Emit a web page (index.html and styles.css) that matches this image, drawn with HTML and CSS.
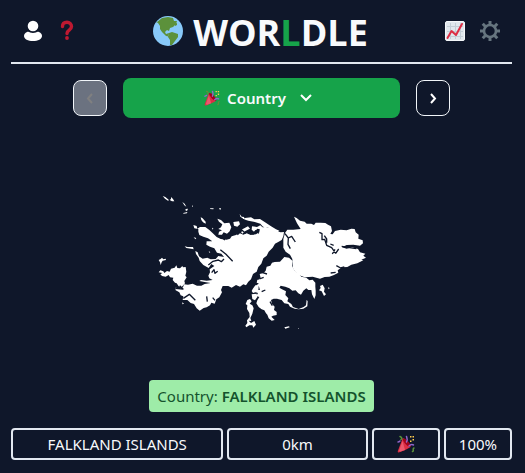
FILE: index.html
```html
<!DOCTYPE html>
<html lang="en">
<head>
<meta charset="utf-8">
<meta name="viewport" content="width=device-width, initial-scale=1">
<title>Worldle</title>
<link rel="stylesheet" href="styles.css">
</head>
<body>
<svg class="defs" aria-hidden="true">
  <symbol id="party" viewBox="0 0 36 36">
    <path fill="#dd2e44" d="M11 7c0 .5-8 22-9 24-.6 1.500-1 4 1 4 3 0 22-9 24-11 1-3-3-8-7-12S12 5 11 7z"/>
    <path fill="#ea596e" d="M11 12 4 32l3 1 9-3-5-18z"/>
    <path fill="#a0041e" d="M12 7c3-1 7 2 11 7s6 9 4 10-8-3-11-7-6-9-4-10z"/>
    <path fill="none" stroke="#9266cc" stroke-width="3" stroke-linecap="round" d="M19 14c3-4 1-8 0-11M2 14c2 0 3-1 4-2M24 22c4-4 7-3 9-2"/>
    <path fill="none" stroke="#5c913b" stroke-width="3" stroke-linecap="round" d="M8 9c3-2 1-5-2-6M31 33c4-1-1-5 3-7"/>
    <path fill="#ffcc4d" d="M26 2h3v3h-3zM31 8h3v3h-3zM26 11h3v3h-3zM31 2h3v3h-3z"/>
  </symbol>
</svg>
<div class="page">
  <header class="header">
    <nav class="tools">
      <button class="icon-button" aria-label="Profile">
        <svg width="20" height="22" viewBox="0 0 20 22" fill="#fff"><circle cx="10" cy="6" r="5.300"/><path d="M4 12c2-1 3 1 6 1s4-2 6-1c2 .8 3 2.400 3 4 0 3-4 5-9 5s-9-2-9-5c0-1.600 1-3.200 3-4z"/></svg>
      </button>
      <button class="icon-button" aria-label="Help">
        <svg width="18" height="22" viewBox="-2 0 18 22"><path fill="none" stroke="#be1931" stroke-width="3.400" stroke-linecap="round" stroke-linejoin="round" d="M2.500 6.500c0-3 2-4.300 4.500-4.300s4.500 1.800 4.500 4.300c0 4-4.500 3.200-4.500 7"/><circle cx="7" cy="18" r="1.900" fill="#be1931"/></svg>
      </button>
    </nav>
    <h1 class="brand">
      <svg width="30" height="30" viewBox="0 0 30 30" aria-hidden="true"><circle cx="15" cy="15" r="15" fill="#88c9f9"/><path fill="#5c913b" d="M4 6 9 2l6-1 5 1 1 3 3 0-1 3-3 3-3 1-1 3-2-1-2 2 1 2 3-1-1 3 3 0 0 1-5-1-4-4-2-3 0-3-2-3-2-1zM16 17l3-1 6 2 0 3-3 4-3 4-2 0 0-5-2-3zM22 8l2-1 0 2-2 1z"/></svg>
      <span class="wordmark">WOR<span class="accent">L</span>DLE</span>
    </h1>
    <nav class="tools">
      <button class="icon-button" aria-label="Statistics">
        <svg width="20" height="20" viewBox="0 0 20 20"><rect x=".5" y=".5" width="19" height="19" rx="1.500" fill="#e1e8ed" stroke="#f5f8fa"/><path stroke="#c3ced6" fill="none" d="M2 5.500h16M2 10.500h16M2 15.500h16M5.500 2v16M10.500 2v16M15.500 2v16"/><path fill="none" stroke="#dd2e44" stroke-width="2" stroke-linecap="round" stroke-linejoin="round" d="m2.500 17 4-7 4.500 4L17 3"/></svg>
      </button>
      <button class="icon-button" aria-label="Settings">
        <svg width="20" height="20" viewBox="0 0 20 20"><circle cx="10" cy="10" r="6" fill="none" stroke="#66757f" stroke-width="2.600"/><path stroke="#66757f" stroke-width="3" d="M10 0v4M10 16v4M0 10h4M16 10h4M2.700 2.700l3 3M14.300 14.300l3 3M17.300 2.700l-3 3M5.700 14.300l-3 3"/></svg>
      </button>
    </nav>
  </header>

  <main class="game">
    <div class="rounds">
      <button class="step" disabled aria-label="Previous round">
        <svg width="12" height="14" viewBox="0 0 12 14"><path d="M8 3 4 7.500 8 12"/></svg>
      </button>
      <button class="round">
        <svg width="16" height="16" aria-hidden="true"><use href="#party"/></svg>
        <span>Country</span>
        <svg class="chevron" width="14" height="10" viewBox="0 0 14 10" aria-hidden="true"><path d="m2 2 5 5 5-5"/></svg>
      </button>
      <button class="step" aria-label="Next round">
        <svg width="12" height="14" viewBox="0 0 12 14"><path d="M4 3l4 4.500L4 12"/></svg>
      </button>
    </div>

    <div class="map">
      <svg width="223" height="150" viewBox="0 0 669 450" role="img" aria-label="Country outline">
        <g fill="#fff">
          <!-- Western main island -->
          <path d="M130 120L140 123 142 131 150 126 166 126 178 135 190 146 200 156 212 162 230 164 240 161 245 154 258 150 268 144 280 149 290 145 302 150 318 148 328 141 330 130 346 125 356 129 368 135 380 138 392 142 402 141 400 154 395 165 386 170 375 176 368 188 356 200 350 212 340 220 334 236 325 246 320 260 309 267 303 283 295 290 288 301 280 298 270 305 258 300 245 308 235 303 218 303 213 315 216 322 208 337 199 343 194 356 184 353 180 361 170 367 161 369 149 377 140 370 132 357 122 354 112 345 98 345 100 334 92 331 88 322 77 316 76 308 88 310 99 307 102 298 114 299 128 296 141 302 154 302 164 297 182 294 168 292 148 288 153 285 170 287 188 285 178 280 175 272 180 262 179 253 193 243 184 237 176 249 160 240 149 228 146 218 138 207 136 198 143 202 147 214 158 221 172 218 182 223 197 222 205 213 222 216 214 206 201 203 193 190 180 185 169 179 170 169 187 169 174 160 160 155 148 150 145 140 145 132 133 130z"/>
          <!-- Northern coves and islets -->
          <path d="M202 101l11 4 10 10 15-2 6 14-5 12-8 7-10-4-5 7-11 0 2-9 9-4-11-4 8-5 4-9-10-8zM250 111l17-2 3 9-8 7-10-3zM269 87l6 8 8 1-2 6-10-7zM285 99l18-2 10 6 17-1 14 9 18 12 16 10 10 4-9 8-16-5-8-12-16-3-8-9-20-6-16-3-7-2-9-4zM277 133l17-9 6 7-14 7-9 8-4-5zM306 124l15 2 10-5 9 8-11 4-7-2-9 10-8-7zM338 132l14-2 9 10-14 4-5 3-8-6z"/>
          <!-- Western islets -->
          <path d="M38 33l8 3 10 8-1 4-10-7zM63 36l6 6 4 7-7 0-7-4 4-3zM97 51l7 5 5 9-6-4zM107 72l7-1-3 7-5-2zM100 84l12-3-1 4-11 1zM181 70l10 0-1 3-10-1zM208 69l5 1-1 4-4-1zM126 60l3 4-2 3zM152 97l5 2 10 11 0 6-8-4-5-7zM131 157l8 2-3 4zM104 184l9 2 16 0 2 7-8-2-14-2zM176 199l5 2-2 3zM186 128l4 2-2 4zM97 352l5 4-5 2z"/>
          <path d="M26 225l6-3 4-4 4 5 7-2 1 4-10 2-3 5-3 8-2-8zM26 262l5-6 9 3 3 5 8-6 8 2 4-9 11-3 5-7 3 8 8 1 7-7 2 4 8-1 2 14-3 12 4 5-7 11 2 7-10 11-9-2-6-9-5-2-7-8 2-7-10-1-4-7-9 5-11-2-5-5 6-4z"/>
          <!-- Eastern main island -->
          <path d="M432 95L440 99 450 107 464 110 470 116 484 116 492 120 497 113 512 113 526 114 534 119 543 124 546 138 541 147 548 148 555 138 572 134 590 136 604 131 614 132 617 142 626 149 625 161 638 166 639 175 630 182 610 179 590 180 576 187 590 191 606 187 624 192 630 202 646 206 640 212 648 218 634 224 640 226 622 235 604 239 592 246 576 247 563 256 565 263 552 270 538 275 524 276 510 281 488 275 464 277 448 271 436 261 428 248 428 236 427 222 420 209 407 200 400 188 400 162 405 144 412 134 430 134 452 132 441 115z"/>
          <!-- Southern lowland -->
          <path d="M390 230l13-14 14 2 11 10-2 15 10 17 9 5 9 10 15 3 9 8 10-2 8 9 0 12 1 12 0 14-4 11-7-14-2-13-9 0-6-5-9 7-7 12-8-4-8-9-10 1-9-7-12-5-14-3-4 6 8 5 12 6-2 11 9 10-3 9 12 8 5 9 17 6 15-6 7-5 2-17 3 5-1 15-12 7-14 2-12-2-14-6-5-8-12-2-8-10-14-4-10 0-8 4 3 12 8 8-2 10 8 6 0 9-11 2-5 3 10 10-9 2-9-7-4-11-4-4-5-9-8-3-9-7-7-11 3-9 6-10-9-3 5-9-7-2 3-9 10 2-3-10-8-4 7-5-1-12 7-5-3-12 12-3 6-7 3-12 11-3 5-9 8-2z"/>
          <path d="M510 303l8-4 6 11-2 10 6 8-6 5-3-6-4-8-8-3 5-7zM534 307l5 2-3 4zM292 345l8-3 5 7-6 7 8 5 4 9-4 16-6 13 3 9-8-1 7 7 10-6 5 11-8 9-3-7-9 0-9 6-3-5 6-8-1-8 8-10-1-12-7-12 1-11-5-4zM308 312l8-11 9-1 1 10-5 10-12 4-4-6zM322 284l9 2-2 10-9-3zM305 328l15-2 2 10-7 10-8-4zM403 427l14-3 2 3-13 4zM444 429l3 1-2 2z"/>
        </g>
        <!-- Inlets and narrow channels -->
        <g fill="none" stroke="#0f172a" stroke-width="4" stroke-linejoin="round">
          <path d="M211 194l17 14 20 21M212 155l13 10M175 240l14-11 16-4 9 5 8-8M185 263l7-9 3 11 8-6M100 340l18-12 18 18M172 350l-2-16M188 338l7 8M76 310l23 2-10-10M262 149l14-13 10 8 13-9M308 149l9-12 10 8"/>
          <path d="M405 146l10 13-1 19 7 13M415 159l10-5 11 17M508 142l8 4 0 18 8-1 6 18 15 7 12 17M523 152l7 10 0 11M541 177l10 4M557 205l9-13M555 193l-8 14M575 184l18 3 26 4" />
          <path d="M335 320l11-5M328 282l13-5M338 263l13 4M542 264l15-2M559 242l13 7 11-3M360 350l7 12"/>
        </g>
      </svg>
    </div>

    <p class="answer">Country: <strong>FALKLAND ISLANDS</strong></p>

    <div class="guess">
      <div class="cell name">FALKLAND ISLANDS</div>
      <div class="cell distance">0km</div>
      <div class="cell"><svg width="18" height="18" role="img" aria-label="Correct"><use href="#party"/></svg></div>
      <div class="cell">100%</div>
    </div>
  </main>
</div>
</body>
</html>
```
FILE: styles.css
```css
* {
  box-sizing: border-box;
}

body {
  margin: 0;
  background: #0f172a;
  color: #f8fafc;
  font: 15px/24px "Noto Sans", "Open Sans", sans-serif;
}

button {
  padding: 0;
  border: 0;
  background: none;
  color: inherit;
  font: inherit;
}

svg {
  display: block;
}

.defs {
  position: absolute;
  width: 0;
  height: 0;
}

.page {
  padding: 0 13px 12px 11px;
}

.header {
  display: flex;
  align-items: center;
  justify-content: space-between;
  height: 64px;
  padding: 0 12px;
  border-bottom: 2px solid #e2e8f0;
}

.tools {
  display: flex;
  align-items: center;
  gap: 15px;
}

.brand {
  display: flex;
  align-items: center;
  gap: 10px;
  margin: 0;
  font-family: "Open Sans", "Noto Sans", sans-serif;
  font-size: 36px;
  line-height: 40px;
  font-weight: 700;
}

.wordmark {
  padding-top: 4px;
}

.accent {
  color: #16a34a;
}

.game {
  display: flex;
  flex-direction: column;
  align-items: center;
}

.rounds {
  display: flex;
  align-items: center;
  align-self: stretch;
  gap: 16px;
  padding: 14px 62px 0;
}

.step {
  display: grid;
  place-items: center;
  width: 34px;
  height: 36px;
  border: 1px solid #f1f5f9;
  border-radius: 8px;
}

.step:disabled {
  background: #6b7280;
}

.step path,
.chevron path {
  fill: none;
  stroke: #fff;
  stroke-width: 2;
}

.step:disabled path {
  stroke: #808080;
}

.round {
  display: flex;
  flex: 1;
  align-items: center;
  justify-content: center;
  gap: 7px;
  height: 40px;
  padding-right: 6px;
  border-radius: 8px;
  background: #16a34a;
  font-weight: 600;
}

.chevron {
  margin-left: 6px;
}

.map {
  padding: 67px 0 45px;
}

.answer {
  margin: 0;
  padding: 4px 8px;
  border-radius: 4px;
  background: #9eeca8;
  color: #14532d;
}

.answer strong {
  font-weight: 600;
}

.guess {
  display: grid;
  grid-template-columns: repeat(7, 1fr);
  align-self: stretch;
  gap: 4px;
  margin-top: 16px;
}

.cell {
  display: flex;
  align-items: center;
  justify-content: center;
  min-width: 0;
  height: 32px;
  border: 2px solid #e2e8f0;
  border-radius: 4px;
}

.name {
  grid-column: span 3;
}

.distance {
  grid-column: span 2;
}
```
